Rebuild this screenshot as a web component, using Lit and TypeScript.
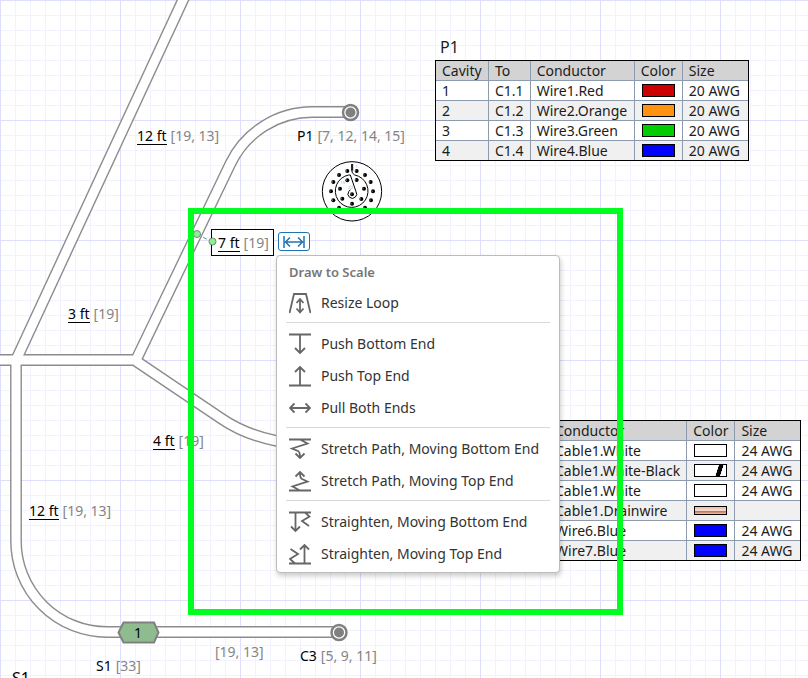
import { LitElement, html, css, svg, nothing } from "lit";
import { customElement, property } from "lit/decorators.js";
import { styleMap } from "lit/directives/style-map.js";

const font = css`"Noto Sans", "Open Sans", sans-serif`;

/* ---------- canvas data ---------- */

interface Label {
  x: number;
  y: number;
  name?: string;
  refs?: string;
  length?: boolean;
  title?: boolean;
}

const labels: Label[] = [
  { x: 137, y: 126, name: "12 ft", refs: "[19, 13]", length: true },
  { x: 297, y: 126, name: "P1", refs: "[7, 12, 14, 15]" },
  { x: 68, y: 304, name: "3 ft", refs: "[19]", length: true },
  { x: 153, y: 431, name: "4 ft", refs: "[19]", length: true },
  { x: 29, y: 501, name: "12 ft", refs: "[19, 13]", length: true },
  { x: 215, y: 642, refs: "[19, 13]" },
  { x: 300, y: 646, name: "C3", refs: "[5, 9, 11]" },
  { x: 96, y: 656, name: "S1", refs: "[33]" },
  { x: 12, y: 667, name: "S1", title: true },
];

const bundles = [
  "M202 -41 L16 360",
  "M-10 360 H136 L230.500 163.500 A91 91 0 0 1 312.500 112 H350",
  "M136 361 L222 419 Q253 440 300 444.500",
  "M16 360 V541 A91 91 0 0 0 107 632 H339",
];

interface Wire {
  cavity?: string;
  to?: string;
  conductor: string;
  color: string;
  size: string;
}

const p1Wires: Wire[] = [
  { cavity: "1", to: "C1.1", conductor: "Wire1.Red", color: "red", size: "20 AWG" },
  { cavity: "2", to: "C1.2", conductor: "Wire2.Orange", color: "orange", size: "20 AWG" },
  { cavity: "3", to: "C1.3", conductor: "Wire3.Green", color: "green", size: "20 AWG" },
  { cavity: "4", to: "C1.4", conductor: "Wire4.Blue", color: "blue", size: "20 AWG" },
];

const cableWires: Wire[] = [
  { conductor: "Cable1.White", color: "white", size: "24 AWG" },
  { conductor: "Cable1.White-Black", color: "striped", size: "24 AWG" },
  { conductor: "Cable1.White", color: "white", size: "24 AWG" },
  { conductor: "Cable1.Drainwire", color: "drain", size: "" },
  { conductor: "Wire6.Blue", color: "blue", size: "24 AWG" },
  { conductor: "Wire7.Blue", color: "blue", size: "24 AWG" },
];

/* ---------- wire table ---------- */

@customElement("wire-table")
export class WireTable extends LitElement {
  @property({ attribute: false }) wires: Wire[] = [];
  @property({ type: Boolean }) full = false;

  static styles = css`
    :host { display: block; }
    table {
      border-collapse: separate;
      border-spacing: 0;
      border: 1px solid #000;
      background: #fff;
      font: 14px/19px ${font};
      color: #1c1c1c;
    }
    th, td {
      height: 19px;
      padding: 0 6px;
      border: 0 solid #8c9cae;
      font-weight: 400;
      text-align: left;
      white-space: nowrap;
    }
    td { border-top-width: 1px; }
    th + th, td + td { border-left-width: 1px; }
    thead tr { background: #d3d3d3; }
    tbody tr:nth-child(even) { background: #f0f0f0; }
    .cavity { width: 40px; }
    .to { width: 28px; }
    .conductor { width: 91px; }
    .wide { width: 125px; }
    .color { width: 35px; }
    .size { width: 53px; }
    .swatch {
      display: block;
      box-sizing: border-box;
      width: 33px;
      height: 13px;
      margin: 0 auto;
      border: 1px solid #000;
      background: #fff;
    }
    .red { background: #c00; }
    .orange { background: #ff930f; }
    .green { background: #0c0; }
    .blue { background: #00f; }
    .striped { background: linear-gradient(108deg, #fff 69%, #000 70%, #000 82%, #fff 83%); }
    .drain { height: 9px; background: linear-gradient(#efc4b4 0 30%, #f3d6ca 30% 50%, #c47a5a 60% 75%, #e8b8a4 85%); }
  `;

  render() {
    return html`<table>
      <thead>
        <tr>
          ${this.full
            ? html`<th class="cavity" scope="col">Cavity</th><th class="to" scope="col">To</th>`
            : nothing}
          <th class="conductor ${this.full ? "" : "wide"}" scope="col">Conductor</th>
          <th class="color" scope="col">Color</th>
          <th class="size" scope="col">Size</th>
        </tr>
      </thead>
      <tbody>
        ${this.wires.map(
          (w) => html`<tr>
            ${this.full ? html`<td>${w.cavity}</td><td>${w.to}</td>` : nothing}
            <td>${w.conductor}</td>
            <td><span class="swatch ${w.color}" role="img" aria-label=${w.color}></span></td>
            <td>${w.size}</td>
          </tr>`
        )}
      </tbody>
    </table>`;
  }
}

/* ---------- context menu ---------- */

const icons = {
  loop: svg`<path d="M.500 21 5 2h12l4.500 19M11 7.500v12M7.500 11 11 7l3.500 4M7.500 16.500l3.500 4 3.500-4"/>`,
  pushBottom: svg`<path d="M0 1.500h22M11 1.500v18M6 15l5 5 5-5"/>`,
  pushTop: svg`<path d="M0 20.500h22M11 20.500V2M6 7l5-5 5 5"/>`,
  pull: svg`<path d="M1 11h20M5.500 6.500 1 11l4.500 4.500M16.500 6.500 21 11l-4.500 4.500"/>`,
  stretchBottom: svg`<path d="M0 1.500h22M11 1.500 18.500 5.500 3 10.500 9 13q2 1 2 6M6.500 15.500 11 20l4.500-4.500"/>`,
  stretchTop: svg`<path d="M0 20.500h22M11 20.500 3.500 16.500 18.500 11.500 13 9Q11 8 11 3M6.500 6.500 11 2l4.500 4.500"/>`,
  straightBottom: svg`<path d="M0 1.500h22M6.500 1.500v18M2 15.500 6.500 20l4.500-4.500M16 1.500l4.500 4L13 10l7 5"/>`,
  straightTop: svg`<path d="M0 20.500h22M15.500 20.500V2M11 6.500 15.500 2 20 6.500M6 20.500l-5-4.500 8-5-7.500-5"/>`,
};

const menu = [
  [{ icon: icons.loop, text: "Resize Loop" }],
  [
    { icon: icons.pushBottom, text: "Push Bottom End" },
    { icon: icons.pushTop, text: "Push Top End" },
    { icon: icons.pull, text: "Pull Both Ends" },
  ],
  [
    { icon: icons.stretchBottom, text: "Stretch Path, Moving Bottom End" },
    { icon: icons.stretchTop, text: "Stretch Path, Moving Top End" },
  ],
  [
    { icon: icons.straightBottom, text: "Straighten, Moving Bottom End" },
    { icon: icons.straightTop, text: "Straighten, Moving Top End" },
  ],
];

@customElement("scale-menu")
export class ScaleMenu extends LitElement {
  static styles = css`
    :host {
      display: block;
      box-sizing: border-box;
      padding: 0 9px 2px;
      border: 1px solid #bcbcbc;
      border-radius: 4px;
      background: #fff;
      box-shadow: 1px 3px 5px rgba(0, 0, 0, 0.2);
      font: 14px/32px ${font};
      color: #333;
    }
    h2 {
      margin: 0;
      padding: 1px 0 0 3px;
      font-size: 13px;
      line-height: 30px;
      font-weight: 600;
      color: #777;
    }
    .group + .group {
      margin-top: 3px;
      padding-top: 5px;
      border-top: 1px solid #d8d8d8;
    }
    button {
      display: flex;
      align-items: center;
      gap: 10px;
      width: 100%;
      height: 32px;
      padding: 0 3px;
      border: 0;
      background: none;
      font: inherit;
      color: inherit;
      text-align: left;
      white-space: nowrap;
    }
    svg {
      width: 22px;
      height: 22px;
      flex: none;
      fill: none;
      stroke: #666;
      stroke-width: 1.8;
    }
  `;

  render() {
    return html`<h2>Draw to Scale</h2>
      ${menu.map(
        (group) => html`<div class="group" role="group">
          ${group.map(
            (item) => html`<button type="button">
              <svg viewBox="0 0 22 22" aria-hidden="true">${item.icon}</svg>${item.text}
            </button>`
          )}
        </div>`
      )}`;
  }
}

/* ---------- connector face ---------- */

const pins = [
  [97, 48], [125, 48], [72, 60], [150, 60], [55, 81], [167, 81], [48, 109], [174, 109],
  [55, 136], [168, 136], [72, 158], [150, 158], [97, 170], [125, 170],
  [97, 76], [125, 75], [75, 101], [147, 101], [82, 131], [139, 132], [111, 146], [111, 118],
];

const connectorFace = svg`
  <svg x="315" y="155" width="75" height="75" viewBox="0 0 225 225">
    <circle class="face" cx="111" cy="109" r="89"/>
    <path class="line" d="M110 27v18q0 10 9 15A49 49 0 1 1 101 60h5L123 110A13 13 0 1 1 101 110L106 104"/>
    <path class="line" d="M113 27v20"/>
    ${pins.map(([x, y]) => svg`<circle class="pin" cx=${x} cy=${y} r="6"/><path class="glint" d="M${x - 3} ${y - 3}v5"/>`)}
    <text class="tiny" x="121" y="38">1</text>
    <text class="tiny" x="76" y="86">15</text>
    <text class="tiny" x="99" y="103">22</text>
  </svg>`;

/* ---------- page ---------- */

@customElement("app-root")
export class AppRoot extends LitElement {
  static styles = css`
    :host {
      display: block;
      position: relative;
      min-height: 100vh;
      overflow: hidden;
      background-color: #fff;
      background-image:
        linear-gradient(90deg, #dedeff 1px, transparent 1px),
        linear-gradient(#dedeff 1px, transparent 1px),
        linear-gradient(90deg, #f1f1ff 1px, transparent 1px),
        linear-gradient(#f1f1ff 1px, transparent 1px);
      background-size: 120px 120px, 120px 120px, 15px 15px, 15px 15px;
      font: 14px/19px ${font};
      color: #000;
    }
    .drawing { position: absolute; inset: 0; width: 100%; height: 100%; }
    .sheath { fill: none; stroke: #8c8c8c; stroke-width: 11.8; }
    .core { fill: none; stroke: #fff; stroke-width: 9; }
    .ring { fill: #fff; stroke: #808080; stroke-width: 2.5; }
    .hub { fill: #808080; }
    .splice { fill: #8fbc8f; stroke: #808080; stroke-width: 2; }
    .splice-text { font-size: 14px; text-anchor: middle; }
    .face { fill: #fff; stroke: #000; stroke-width: 3; }
    .line { fill: none; stroke: #000; stroke-width: 3; }
    .pin { fill: #000; }
    .glint { stroke: #aaa; stroke-width: 2; }
    .tiny { font-size: 13px; fill: #8ab4e0; }
    .leader { stroke: #5f8f9f; stroke-dasharray: 4 3; }
    .handle { fill: #90ee90; stroke: #6c8a80; }
    .label, .table, .length-box, .fit, .menu, .highlight { position: absolute; }
    .label { display: flex; gap: 4px; white-space: nowrap; }
    .title { font-size: 16px; line-height: 22px; }
    .length { box-shadow: inset 0 -1px #000; }
    .refs { color: #858585; }
    .p1-table { left: 435px; top: 36px; }
    .p1-table h2 { margin: 0 0 2px 5px; font-size: 16px; line-height: 22px; font-weight: 400; color: #1c1c1c; }
    .cable-table { left: 548px; top: 420px; }
    .length-box {
      left: 211px;
      top: 229px;
      display: flex;
      gap: 4px;
      padding: 3px 4px 3px 6px;
      border: 1px solid #000;
      background: #fff;
    }
    .fit {
      left: 278px;
      top: 232px;
      width: 32px;
      height: 19px;
      padding: 0;
      border: 1px solid #1f73b3;
      border-radius: 3px;
      background: #fff;
    }
    .fit svg { display: block; margin: auto; width: 22px; height: 12px; fill: none; stroke: #1f73b3; stroke-width: 1.5; }
    .menu { left: 276px; top: 255px; width: 284px; }
    .highlight {
      left: 188px;
      top: 208px;
      box-sizing: border-box;
      width: 435px;
      height: 407px;
      border: 6px solid #00ff21;
      pointer-events: none;
    }
  `;

  private renderLabel(l: Label) {
    return html`<div
      class="label ${l.title ? "title" : ""}"
      style=${styleMap({ left: `${l.x}px`, top: `${l.y}px` })}
    >
      ${l.name ? html`<span class=${l.length ? "length" : "name"}>${l.name}</span>` : nothing}
      ${l.refs ? html`<span class="refs">${l.refs}</span>` : nothing}
    </div>`;
  }

  render() {
    return html`
      <svg class="drawing" aria-hidden="true">
        ${bundles.map((d) => svg`<path class="sheath" d=${d}/>`)}
        ${bundles.map((d) => svg`<path class="core" d=${d}/>`)}
        <circle class="ring" cx="350.500" cy="112.500" r="7.500"/>
        <circle class="hub" cx="350.500" cy="112.500" r="5"/>
        <circle class="ring" cx="339" cy="632.500" r="7.500"/>
        <circle class="hub" cx="339" cy="632.500" r="5"/>
        <path class="splice" d="M118.500 632.500 123.500 622.500H154L158.500 632.500 154 642.500H123.500Z"/>
        <text class="splice-text" x="138" y="638">1</text>
        ${connectorFace}
      </svg>
      ${labels.map((l) => this.renderLabel(l))}
      <section class="table p1-table">
        <h2>P1</h2>
        <wire-table full .wires=${p1Wires}></wire-table>
      </section>
      <wire-table class="table cable-table" .wires=${cableWires}></wire-table>
      <div class="length-box">
        <span class="length">7 ft</span><span class="refs">[19]</span>
      </div>
      <svg class="drawing" aria-hidden="true">
        <path class="leader" d="M197 234 212 242"/>
        <circle class="handle" cx="197" cy="234" r="3.500"/>
        <circle class="handle" cx="212.500" cy="241.500" r="3.500"/>
      </svg>
      <button class="fit" type="button" aria-label="Draw to scale">
        <svg viewBox="0 0 22 12"><path d="M1 0v12M21 0v12M2 6h18M7 1.500 2.500 6 7 10.500M15 1.500 19.500 6 15 10.500"/></svg>
      </button>
      <scale-menu class="menu"></scale-menu>
      <div class="highlight"></div>
    `;
  }
}
